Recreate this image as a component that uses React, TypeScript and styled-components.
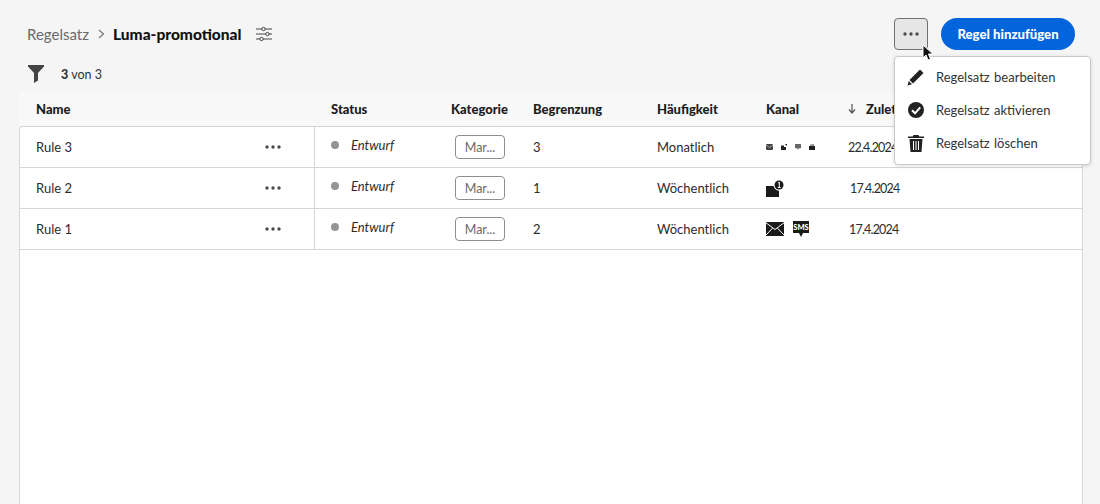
import { FC } from "react";
import styled, { createGlobalStyle } from "styled-components";

const GlobalStyle = createGlobalStyle`
  html, body { margin: 0; padding: 0; height: 504px; overflow: hidden; background: #f5f5f5; }
  body { font-family: "Lato", "Noto Sans", sans-serif; color: #2c2c2c; }
`;

const Page = styled.div`
  position: relative;
  width: 1100px;
  height: 504px;
  box-sizing: border-box;
  padding: 18px 17px 0 19px;
  overflow: hidden;
`;

const TopBar = styled.header`
  display: flex;
  align-items: center;
  height: 32px;
  padding: 0 8px;
`;

const Crumbs = styled.nav`
  display: flex;
  align-items: center;
  flex: 1;
  font-size: 15px;
  color: #6a6a6a;
`;

const Chevron = styled.svg`
  margin: 0 8px 0 9px;
`;

const Current = styled.strong`
  font-size: 15.5px;
  font-weight: 900;
  color: #111;
  margin-right: 14px;
`;

const MoreButton = styled.button`
  display: flex;
  align-items: center;
  justify-content: center;
  width: 34px;
  height: 32px;
  box-sizing: border-box;
  padding: 0;
  margin-right: 13px;
  background: #e6e6e6;
  border: 1px solid #707070;
  border-radius: 4px;
`;

const PrimaryButton = styled.button`
  width: 134px;
  height: 32px;
  padding: 0;
  border: 0;
  border-radius: 16px;
  background: #0265dc;
  color: #fff;
  font: 900 13.2px "Lato", sans-serif;
`;

const FilterRow = styled.div`
  display: flex;
  align-items: center;
  height: 20px;
  margin-top: 14px;
  padding-left: 9px;
  font-size: 12.5px;
  color: #333;
  gap: 17px;
  b { font-weight: 900; }
`;

const HeadRow = styled.div`
  display: grid;
  grid-template-columns: 295px 137px 82px 124px 109px 81px 1fr;
  height: 34px;
  box-sizing: border-box;
  padding-bottom: 1px;
  margin-top: 8px;
  align-items: center;
  background: #f8f8f8;
  font-size: 13px;
  font-weight: 900;
  color: #1d1d1d;
  white-space: nowrap;
`;

const HeadCell = styled.div<{ $indent?: number }>`
  display: flex;
  align-items: center;
  gap: 10px;
  padding-left: ${(p) => p.$indent ?? 0}px;
`;

/* the open menu cuts this label off in the picture */
const ClippedLabel = styled.span`
  width: 29px;
  overflow: hidden;
`;

const Table = styled.div`
  height: 400px;
  width: 1064px;
  box-sizing: border-box;
  background: #fff;
  border: 1px solid #d5d5d5;
  border-bottom: 0;
  border-radius: 4px 4px 0 0;
`;

const Row = styled.div`
  display: grid;
  grid-template-columns: 295px 136px 82px 124px 109px 81px 1fr;
  height: 41px;
  box-sizing: border-box;
  border-bottom: 1px solid #d5d5d5;
  align-items: center;
  font-size: 13px;
  color: #2c2c2c;
`;

const NameCell = styled.div`
  display: flex;
  align-items: center;
  justify-content: space-between;
  height: 100%;
  padding: 0 33px 0 16px;
  box-sizing: border-box;
  border-right: 1px solid #d5d5d5;
`;

const StatusCell = styled.div`
  display: flex;
  align-items: center;
  gap: 12px;
  padding-left: 16px;
  margin-top: -4px;
  font-style: italic;
`;

const Dot = styled.span`
  width: 8px;
  height: 8px;
  border-radius: 50%;
  background: #959595;
`;

const Tag = styled.span`
  display: flex;
  align-items: center;
  justify-content: center;
  width: 50px;
  height: 24px;
  box-sizing: border-box;
  margin-left: 4px;
  background: #fff;
  border: 1px solid #8e8e8e;
  border-radius: 4px;
  font-size: 12.5px;
  color: #6a6a6a;
`;

const Cell = styled.div<{ $indent?: number }>`
  display: flex;
  align-items: center;
  padding-left: ${(p) => p.$indent ?? 0}px;
`;

const DateCell = styled(Cell)`
  font-size: 12.5px;
  letter-spacing: -0.8px;
`;

const Channels = styled.div<{ $gap: number }>`
  display: flex;
  align-items: center;
  gap: ${(p) => p.$gap}px;
`;

const Menu = styled.ul`
  position: absolute;
  top: 56px;
  left: 894px;
  width: 197px;
  height: 109px;
  box-sizing: border-box;
  margin: 0;
  padding: 3px 0 0;
  list-style: none;
  background: #fff;
  border: 1px solid #c8c8c8;
  border-radius: 4px;
  box-shadow: 0 1px 4px rgba(0, 0, 0, 0.12);
`;

const MenuItem = styled.li`
  display: flex;
  align-items: center;
  height: 33px;
  padding-left: 12px;
  gap: 11px;
  font-size: 13px;
  word-spacing: 1px;
  color: #333;
  white-space: nowrap;
`;

const MenuIcon = styled.svg`
  flex: none;
  width: 18px;
  height: 18px;
  fill: #222;
`;

const Cursor = styled.svg`
  position: absolute;
  top: 44px;
  left: 922px;
`;

const Dots: FC<{ fill?: string }> = ({ fill = "#4b4b4b" }) => (
  <svg width="16" height="4" viewBox="0 0 16 4" fill={fill}>
    <circle cx="2" cy="2" r="1.7" />
    <circle cx="8" cy="2" r="1.7" />
    <circle cx="14" cy="2" r="1.7" />
  </svg>
);

const Sliders = () => (
  <svg width="18" height="16" viewBox="0 0 18 16" fill="none" stroke="#444" strokeWidth="1">
    <path d="M1 3h6M10 3h7M1 8h10M14 8h3M1 13h4M8 13h9" />
    <circle cx="8.5" cy="3" r="1.7" />
    <circle cx="12.5" cy="8" r="1.7" />
    <circle cx="6.5" cy="13" r="1.7" />
  </svg>
);

const Funnel = () => (
  <svg width="16" height="18" viewBox="0 0 16 18" fill="#444">
    <path d="M0 0h16v1.5L10 8v7.5L6 18V8L0 1.5z" />
  </svg>
);

const TinyIcons = () => (
  <Channels $gap={8}>
    <svg width="7" height="6" viewBox="0 0 7 6"><rect width="7" height="6" rx="1" fill="#444" /><path d="M0 1l3.500 2.500L7 1" stroke="#ddd" strokeWidth=".7" fill="none" /></svg>
    <svg width="6" height="6" viewBox="0 0 6 6" fill="#222"><path d="M0 1.500h3V3h2v3H0zM3.800 0L6 0v2z" /></svg>
    <svg width="6" height="6" viewBox="0 0 6 6" fill="#666"><path d="M0 0h6v4.200H3.800L3 6 2.200 4.200H0z" /></svg>
    <svg width="6" height="6" viewBox="0 0 6 6" fill="#222"><path d="M0 2h6v4H0zM1.500 2V.5h1V2zM3.500 2V0h1v2z" /></svg>
  </Channels>
);

const PushIcon = () => (
  <svg width="18" height="17" viewBox="0 0 18 17">
    <path d="M0 6h8l5 5v6H0z" fill="#1a1a1a" />
    <circle cx="13" cy="5" r="5.500" fill="#fff" />
    <circle cx="13" cy="5" r="4.500" fill="#1a1a1a" />
    <path d="M12 3l1.300-.8V7.500M11.800 7.500h3" stroke="#fff" strokeWidth="1" fill="none" />
  </svg>
);

const MailIcon = () => (
  <svg width="18" height="14" viewBox="0 0 18 14">
    <rect width="18" height="14" fill="#1a1a1a" />
    <path d="M0 .8l9 6.700 9-6.700M0 13l6.500-6.800M18 13l-6.500-6.800" stroke="#fff" strokeWidth="1" fill="none" />
  </svg>
);

const SmsIcon = () => (
  <svg width="16" height="16" viewBox="0 0 16 16">
    <path d="M0 0h16v12h-6l-2 4-2-4H0z" fill="#1a1a1a" />
    <text x="8" y="9" fontSize="7.5" fontWeight="900" fontFamily="Lato, sans-serif" textAnchor="middle" fill="#fff">SMS</text>
  </svg>
);

const rules = [
  { name: "Rule 3", limit: "3", freq: "Monatlich", date: "22.4.2024", channel: <TinyIcons />, indent: 1 },
  { name: "Rule 2", limit: "1", freq: "Wöchentlich", date: "17.4.2024", channel: <PushIcon />, indent: 3 },
  {
    name: "Rule 1",
    limit: "2",
    freq: "Wöchentlich",
    date: "17.4.2024",
    channel: (
      <Channels $gap={9}>
        <MailIcon />
        <SmsIcon />
      </Channels>
    ),
    indent: 2,
  },
];

const App: FC = () => (
  <>
    <GlobalStyle />
    <Page>
      <TopBar>
        <Crumbs>
          Regelsatz
          <Chevron width="7" height="10" viewBox="0 0 7 10" fill="none" stroke="#777" strokeWidth="1.200">
            <path d="M1 1l4.500 4L1 9" />
          </Chevron>
          <Current>Luma-promotional</Current>
          <Sliders />
        </Crumbs>
        <MoreButton aria-label="Mehr">
          <Dots />
        </MoreButton>
        <PrimaryButton>Regel hinzufügen</PrimaryButton>
      </TopBar>

      <FilterRow>
        <Funnel />
        <span>
          <b>3</b> von 3
        </span>
      </FilterRow>

      <HeadRow>
        <HeadCell $indent={17}>Name</HeadCell>
        <HeadCell $indent={17}>Status</HeadCell>
        <HeadCell>Kategorie</HeadCell>
        <HeadCell>Begrenzung</HeadCell>
        <HeadCell>Häufigkeit</HeadCell>
        <HeadCell>Kanal</HeadCell>
        <HeadCell $indent={1}>
          <svg width="8" height="10" viewBox="0 0 8 10" fill="none" stroke="#555" strokeWidth="1.200">
            <path d="M4 0v9M1 5.500L4 9l3-3.500" />
          </svg>
          <ClippedLabel>Zuletzt geändert</ClippedLabel>
        </HeadCell>
      </HeadRow>

      <Table>
        {rules.map((r) => (
          <Row key={r.name}>
            <NameCell>
              {r.name}
              <Dots />
            </NameCell>
            <StatusCell>
              <Dot />
              Entwurf
            </StatusCell>
            <Cell>
              <Tag>Mar...</Tag>
            </Cell>
            <Cell>{r.limit}</Cell>
            <Cell>{r.freq}</Cell>
            <Cell>{r.channel}</Cell>
            <DateCell $indent={r.indent}>{r.date}</DateCell>
          </Row>
        ))}
      </Table>

      <Menu>
        <MenuItem>
          <MenuIcon viewBox="0 0 18 18">
            <path d="M13 1.500l3.500 3.500L6 15.500 2.500 12zM1.800 13l3.200 3.200L.5 17.500z" />
          </MenuIcon>
          Regelsatz bearbeiten
        </MenuItem>
        <MenuItem>
          <MenuIcon viewBox="0 0 18 18">
            <circle cx="9" cy="9" r="8" />
            <path d="M5 9.300l3 3 5.200-6" fill="none" stroke="#fff" strokeWidth="2" />
          </MenuIcon>
          Regelsatz aktivieren
        </MenuItem>
        <MenuItem>
          <MenuIcon viewBox="0 0 18 18">
            <path d="M6.500 1h5l.8 1.500H17V4H1V2.500h4.700zM2.500 5h13l-1 13h-11zM6 7v9h1V7zM8.500 7v9h1V7zM11 7v9h1V7z" fillRule="evenodd" />
          </MenuIcon>
          Regelsatz löschen
        </MenuItem>
      </Menu>

      <Cursor width="12" height="18" viewBox="0 0 12 18">
        <path d="M1 1v13l3-3 2 5 2.500-1-2-5H11z" fill="#111" stroke="#fff" strokeWidth="1" />
      </Cursor>
    </Page>
  </>
);

export default App;
